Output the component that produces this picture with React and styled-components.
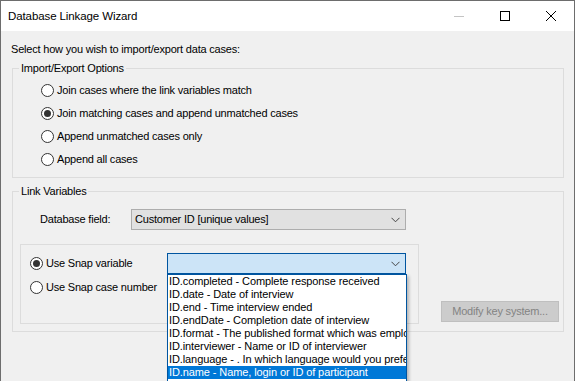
import React from "react";
import styled, { createGlobalStyle } from "styled-components";

const GlobalStyle = createGlobalStyle`
  * {
    box-sizing: border-box;
  }
  body {
    margin: 0;
    background: #f0f0f0;
    font-family: "Liberation Sans", Arial, sans-serif;
    font-size: 11px;
    letter-spacing: -0.2px;
    color: #000;
  }
`;

const Window = styled.div`
  width: 575px;
  height: 381px;
  overflow: hidden;
  border: 1px solid #6d6d6d;
  border-bottom: none;
  background: #f0f0f0;
  display: flex;
  flex-direction: column;
`;

const TitleBar = styled.div`
  height: 30px;
  flex-shrink: 0;
  background: #fff;
  display: flex;
  align-items: center;
  padding-left: 7px;
`;

const Title = styled.span`
  flex: 1;
  font-size: 11.5px;
  letter-spacing: -0.1px;
  color: #000;
`;

const CaptionButton = styled.div`
  width: 46px;
  height: 30px;
  display: flex;
  align-items: center;
  justify-content: center;
`;

const Body = styled.div`
  padding: 12px 10px 0 11px;
  line-height: 13px;
`;

const Intro = styled.div`
  height: 13px;
  margin-left: -1px;
`;

const Group = styled.fieldset`
  margin: ${(p) => p.$top}px 0 0 0;
  padding: ${(p) => p.$pad};
  border: 1px solid #dcdcdc;
  min-width: 0;
`;

const Legend = styled.legend`
  margin-left: 6px;
  padding: 0 2px;
  line-height: 13px;
  height: 13px;
`;

const RadioList = styled.div`
  padding-left: 28px;
`;

const RadioRow = styled.label`
  display: flex;
  align-items: center;
  height: ${(p) => p.$h || 23}px;
  gap: 3px;
  white-space: nowrap;
`;

const RadioDot = styled.span`
  width: 13px;
  height: 13px;
  border-radius: 50%;
  border: 1px solid #333;
  background: #fff;
  display: flex;
  align-items: center;
  justify-content: center;
  flex-shrink: 0;

  &::after {
    content: "";
    width: 7px;
    height: 7px;
    border-radius: 50%;
    background: ${(p) => (p.$checked ? "#333" : "transparent")};
  }
`;

const FieldRow = styled.div`
  display: flex;
  align-items: center;
  margin-left: 27px;
`;

const FieldLabel = styled.span`
  width: 91px;
`;

const Combo = styled.div`
  position: relative;
  width: ${(p) => p.$w}px;
  height: 21px;
  border: 1px solid ${(p) => (p.$focus ? "#0055a0" : "#adadad")};
  background: ${(p) => (p.$focus ? "#cce4f7" : "#e1e1e1")};
  display: flex;
  align-items: center;
  padding-left: 3px;
`;

const ComboText = styled.span`
  flex: 1;
`;

const Chevron = styled.svg`
  margin-right: 5px;
`;

const LowerRow = styled.div`
  display: flex;
  justify-content: space-between;
  align-items: flex-end;
  margin: 14px 0 0 7px;
`;

const InnerBox = styled.div`
  width: 399px;
  height: 80px;
  border: 1px solid #dcdcdc;
  padding: 8px 0 0 9px;
  display: flex;
  flex-direction: column;
  gap: 3px;
`;

const SnapRow = styled.div`
  display: flex;
  align-items: center;
  height: 21px;
`;

const SnapLabel = styled(RadioRow)`
  width: 137px;
`;

const DropList = styled.ul`
  position: absolute;
  top: 20px;
  left: -1px;
  width: 240px;
  margin: 0;
  padding: 0;
  list-style: none;
  background: #fff;
  border: 1px solid #0055a0;
  box-shadow: 2px 2px 3px rgba(0, 0, 0, 0.25);
  z-index: 5;
`;

const DropItem = styled.li`
  height: 13px;
  line-height: 13px;
  padding-left: 1px;
  letter-spacing: -0.1px;
  white-space: nowrap;
  overflow: hidden;
  background: ${(p) => (p.$selected ? "#0078d7" : "transparent")};
  color: ${(p) => (p.$selected ? "#fff" : "#000")};
`;

const DisabledButton = styled.div`
  width: 118px;
  height: 21px;
  margin: 0 4px 2px 0;
  background: #cccccc;
  border: 1px solid #bfbfbf;
  color: #838383;
  display: flex;
  align-items: center;
  justify-content: center;
`;

const options = [
  "Join cases where the link variables match",
  "Join matching cases and append unmatched cases",
  "Append unmatched cases only",
  "Append all cases",
];

const variables = [
  "ID.completed - Complete response received",
  "ID.date - Date of interview",
  "ID.end - Time interview ended",
  "ID.endDate - Completion date of interview",
  "ID.format - The published format which was employed",
  "ID.interviewer - Name or ID of interviewer",
  "ID.language - .  In which language would you prefer",
  "ID.name - Name, login or ID of participant",
  "ID.start - Time interview started",
];

const ChevronIcon = () => (
  <Chevron width="9" height="6" viewBox="0 0 9 6">
    <path d="M0.5 0.8 L4.5 4.8 L8.5 0.8" fill="none" stroke="#444" strokeWidth="1" />
  </Chevron>
);

export default function App() {
  return (
    <>
      <GlobalStyle />
      <Window>
        <TitleBar>
          <Title>Database Linkage Wizard</Title>
          <CaptionButton>
            <svg width="10" height="10" viewBox="0 0 10 10">
              <path d="M0 5.5 H10" stroke="#c4c4c4" strokeWidth="1" />
            </svg>
          </CaptionButton>
          <CaptionButton>
            <svg width="10" height="10" viewBox="0 0 10 10">
              <rect x="0.5" y="0.5" width="9" height="9" fill="none" stroke="#000" strokeWidth="1" />
            </svg>
          </CaptionButton>
          <CaptionButton>
            <svg width="10" height="10" viewBox="0 0 10 10">
              <path d="M0 0 L10 10 M10 0 L0 10" stroke="#000" strokeWidth="1" />
            </svg>
          </CaptionButton>
        </TitleBar>

        <Body>
          <Intro>Select how you wish to import/export data cases:</Intro>

          <Group $top={6} $pad="4px 0 6px 0">
            <Legend>Import/Export Options</Legend>
            <RadioList>
              {options.map((o, i) => (
                <RadioRow key={o}>
                  <RadioDot $checked={i === 1} />
                  {o}
                </RadioRow>
              ))}
            </RadioList>
          </Group>

          <Group $top={7} $pad="11px 0 7px 0">
            <Legend>Link Variables</Legend>
            <FieldRow>
              <FieldLabel>Database field:</FieldLabel>
              <Combo $w={275}>
                <ComboText>Customer ID [unique values]</ComboText>
                <ChevronIcon />
              </Combo>
            </FieldRow>

            <LowerRow>
              <InnerBox>
                <SnapRow>
                  <SnapLabel $h={21}>
                    <RadioDot $checked />
                    Use Snap variable
                  </SnapLabel>
                  <Combo $w={239} $focus>
                    <ComboText />
                    <ChevronIcon />
                    <DropList>
                      {variables.map((v) => (
                        <DropItem key={v} $selected={v.startsWith("ID.name")}>
                          {v}
                        </DropItem>
                      ))}
                    </DropList>
                  </Combo>
                </SnapRow>
                <RadioRow $h={21}>
                  <RadioDot />
                  Use Snap case number
                </RadioRow>
              </InnerBox>
              <DisabledButton>Modify key system...</DisabledButton>
            </LowerRow>
          </Group>
        </Body>
      </Window>
    </>
  );
}
